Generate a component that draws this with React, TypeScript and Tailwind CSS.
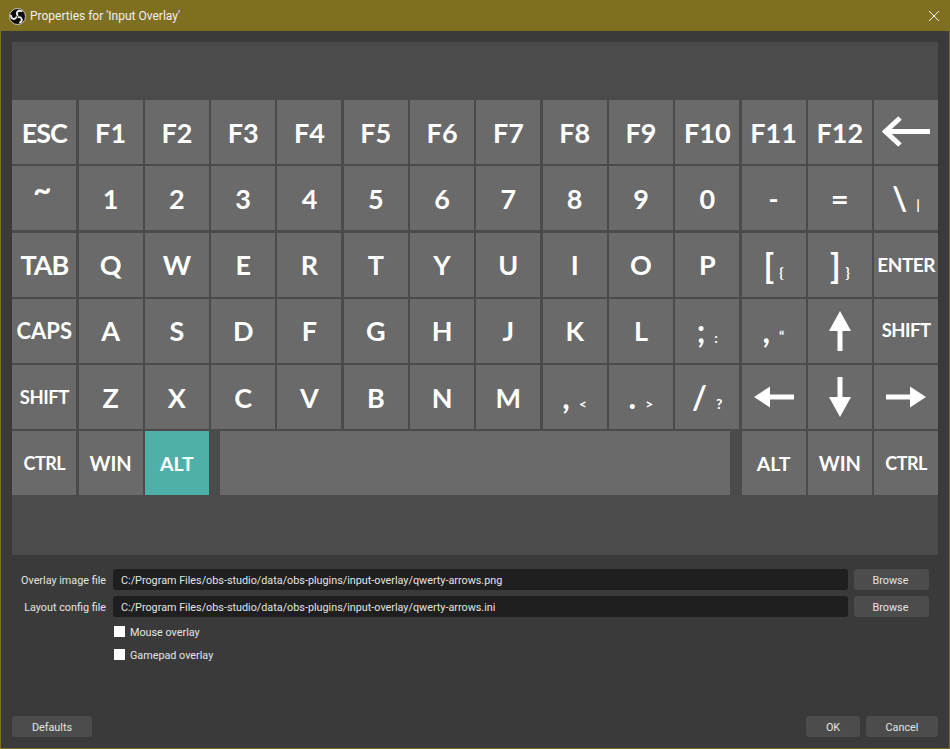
const rows: string[][] = [
  ["F1", "F2", "F3", "F4", "F5", "F6", "F7", "F8", "F9", "F10", "F11", "F12"],
  ["1", "2", "3", "4", "5", "6", "7", "8", "9", "0"],
  ["Q", "W", "E", "R", "T", "Y", "U", "I", "O", "P"],
  ["A", "S", "D", "F", "G", "H", "J", "K", "L"],
  ["Z", "X", "C", "V", "B", "N", "M"],
];

function Key({ children, active }: { children?: React.ReactNode; active?: boolean }) {
  return (
    <div
      className={`h-[64px] flex items-center justify-center text-white font-bold text-[27px] ${
        active ? "bg-[#4fb0aa]" : "bg-[#6a6a6a]"
      }`}
    >
      {children}
    </div>
  );
}

function SmallKey({ label, size }: { label: string; size: string }) {
  return (
    <Key>
      <span className={size}>{label}</span>
    </Key>
  );
}

function PairKey({ main, sub, mainSize = "text-[32px]", gap = "ml-[7px]", lift = "" }: {
  main: string;
  sub: string;
  mainSize?: string;
  gap?: string;
  lift?: string;
}) {
  return (
    <Key>
      <span className="flex items-baseline">
        <span className={`${mainSize} leading-none`}>{main}</span>
        <span className={`text-[14px] leading-none ${gap} ${lift}`}>{sub}</span>
      </span>
    </Key>
  );
}

function Arrow({ d }: { d: string }) {
  return (
    <svg width="50" height="50" viewBox="0 0 50 50" fill="white">
      <path d={d} />
    </svg>
  );
}

function Logo() {
  const blade = "M17 14.500C13.500 9 18 3.500 25 6.500";
  return (
    <svg width="17" height="17" viewBox="0 0 34 34" className="shrink-0" fill="none">
      <circle cx="17" cy="17" r="16" fill="#0c0c0c" stroke="#e8e8e8" strokeWidth="1.600" />
      <g stroke="#f0f0f0" strokeWidth="3.600" strokeLinecap="round">
        <path d={blade} />
        <path d={blade} transform="rotate(120 17 17)" />
        <path d={blade} transform="rotate(240 17 17)" />
      </g>
    </svg>
  );
}

function FileRow({ label, value }: { label: string; value: string }) {
  return (
    <div className="flex items-center h-[21px]">
      <div className="w-[94px] text-right pt-[2px]">{label}</div>
      <div className="ml-[7px] w-[735px] h-full bg-[#1f1f1f] rounded-[3px] pl-[8px] pt-[2px] flex items-center">{value}</div>
      <button className="ml-[6px] w-[75px] h-full bg-[#4c4c4c] rounded-[3px] pt-[2px] pr-[2px]">Browse</button>
    </div>
  );
}

function Check({ label }: { label: string }) {
  return (
    <div className="flex items-center h-[11px] ml-[102px]">
      <div className="w-[11px] h-[11px] bg-white" />
      <span className="ml-[5px] pt-[2px]">{label}</span>
    </div>
  );
}

export default function App() {
  return (
    <div
      className="w-[950px] h-[749px] flex flex-col bg-[#3a3a3a] border border-[#7f6f20] overflow-hidden text-[10.800px] leading-[13px] text-[#e4e4e4]"
      style={{ fontFamily: 'Roboto, sans-serif' }}
    >
      <div className="h-[30px] shrink-0 bg-[#7f6f20] flex items-center pl-[8px] pr-[10px]">
        <Logo />
        <span className="ml-[4px] text-[12px] text-[#f0f0f0]">Properties for 'Input Overlay'</span>
        <svg width="10" height="10" viewBox="0 0 10 10" className="ml-auto" stroke="#f2f2f2" strokeWidth="1">
          <path d="M0 0L10 10M10 0L0 10" />
        </svg>
      </div>

      <div className="flex-1 flex flex-col pt-[11px] px-[11px] pb-[11px]">
        <div
          className="h-[513px] shrink-0 bg-[#4b4b4b] pt-[58.3px] pl-[0.3px]"
          style={{ fontFamily: 'Lato, sans-serif' }}
        >
          <div className="grid grid-cols-[repeat(14,64px)] gap-x-[2.3px] gap-y-[2.2px]">
            <SmallKey label="ESC" size="tracking-[-1px]" />
            {rows[0].map((k) => (
              <Key key={k}>{k}</Key>
            ))}
            <Key>
              <svg width="48" height="32" viewBox="0 0 48 32" fill="none" stroke="white">
                <path d="M2 15.500H48" strokeWidth="5" />
                <path d="M18 2L3.500 15.500L18 29" strokeWidth="5" />
              </svg>
            </Key>

            <Key>
              <span className="text-[32px] -mt-[20px] mr-[4px]">~</span>
            </Key>
            {rows[1].map((k) => (
              <Key key={k}>{k}</Key>
            ))}
            <Key>-</Key>
            <SmallKey label="=" size="text-[31px]" />
            <PairKey main="\" sub="|" gap="ml-[9px]" />

            <SmallKey label="TAB" size="tracking-[-1px]" />
            {rows[2].map((k) => (
              <Key key={k}>{k}</Key>
            ))}
            <PairKey main="[" sub="{" mainSize="text-[34px]" gap="ml-[5px]" />
            <PairKey main="]" sub="}" mainSize="text-[34px]" gap="ml-[5px]" />
            <SmallKey label="ENTER" size="text-[19px] tracking-[-0.5px]" />

            <SmallKey label="CAPS" size="text-[22px]" />
            {rows[3].map((k) => (
              <Key key={k}>{k}</Key>
            ))}
            <PairKey main=";" sub=":" gap="ml-[9px]" lift="text-[12px]" />
            <PairKey main="," sub={"\u201c"} gap="ml-[9px]" lift="-translate-y-[2px]" />
            <Key>
              <Arrow d="M25 5L36 25H27.500V45H22.500V25H14Z" />
            </Key>
            <SmallKey label="SHIFT" size="text-[18.500px] tracking-[-0.5px]" />

            <SmallKey label="SHIFT" size="text-[18.500px] tracking-[-0.5px]" />
            {rows[4].map((k) => (
              <Key key={k}>{k}</Key>
            ))}
            <PairKey main="," sub="<" gap="ml-[9px]" />
            <PairKey main="." sub=">" gap="ml-[9px]" />
            <PairKey main="/" sub="?" gap="ml-[9px]" />
            <Key>
              <Arrow d="M5 25L21 14.500V22.500H45V27.500H21V35.500Z" />
            </Key>
            <Key>
              <Arrow d="M25 45L14 25H22.500V5H27.500V25H36Z" />
            </Key>
            <Key>
              <Arrow d="M45 25L29 14.500V22.500H5V27.500H29V35.500Z" />
            </Key>

            <SmallKey label="CTRL" size="text-[18px] tracking-[-0.5px]" />
            <SmallKey label="WIN" size="text-[20px]" />
            <Key active>
              <span className="text-[19.500px]">ALT</span>
            </Key>
            <div className="col-span-8 mx-[9px] h-[64px] bg-[#6a6a6a]" />
            <SmallKey label="ALT" size="text-[19.500px]" />
            <SmallKey label="WIN" size="text-[20px]" />
            <SmallKey label="CTRL" size="text-[18px] tracking-[-0.5px]" />
          </div>
        </div>

        <div className="mt-[14px] flex flex-col gap-[6px]">
          <FileRow label="Overlay image file" value="C:/Program Files/obs-studio/data/obs-plugins/input-overlay/qwerty-arrows.png" />
          <FileRow label="Layout config file" value="C:/Program Files/obs-studio/data/obs-plugins/input-overlay/qwerty-arrows.ini" />
        </div>
        <div className="mt-[9px] flex flex-col gap-[12px]">
          <Check label="Mouse overlay" />
          <Check label="Gamepad overlay" />
        </div>

        <div className="mt-auto flex h-[21px]">
          <button className="w-[80px] bg-[#4c4c4c] rounded-[3px] pt-[2px]">Defaults</button>
          <button className="ml-auto w-[54px] bg-[#4c4c4c] rounded-[3px] pt-[2px]">OK</button>
          <button className="ml-[6px] w-[72px] bg-[#4c4c4c] rounded-[3px] pt-[2px]">Cancel</button>
        </div>
      </div>
    </div>
  );
}
